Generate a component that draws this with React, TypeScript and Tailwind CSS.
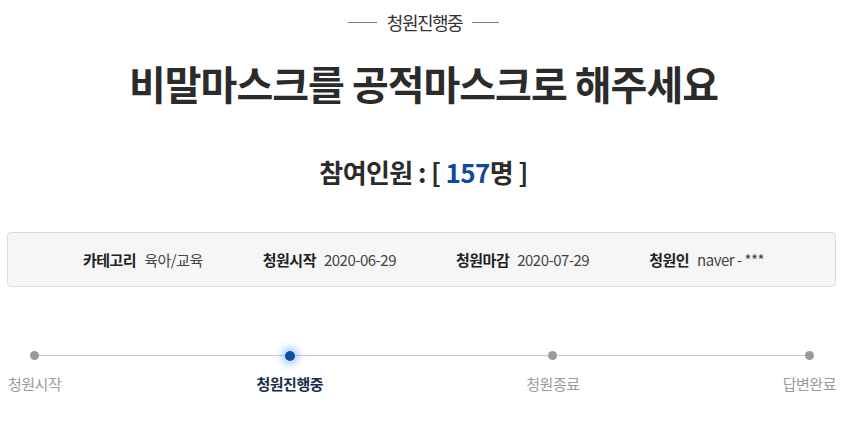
import React from "react";

const steps = [
  { label: "청원시작", active: false },
  { label: "청원진행중", active: true },
  { label: "청원종료", active: false },
  { label: "답변완료", active: false },
];

const infos = [
  { label: "카테고리", value: "육아/교육" },
  { label: "청원시작", value: "2020-06-29" },
  { label: "청원마감", value: "2020-07-29" },
  { label: "청원인", value: "naver - ***" },
];

export default function App() {
  return (
    <div className="w-[847px] h-[422px] bg-white overflow-hidden font-['Noto_Sans_CJK_KR','Liberation_Sans',sans-serif] text-[#333]">
      {/* status tag */}
      <div className="pt-[10px] flex items-center justify-center gap-[10px]">
        <span className="w-[29px] h-px bg-[#777]" />
        <span className="text-[18px] leading-[24px] tracking-[-1.5px] text-[#333]">청원진행중</span>
        <span className="w-[27px] h-px bg-[#777]" />
      </div>

      <h1 className="mt-[24px] text-center text-[40px] leading-[50px] font-bold tracking-[-1px] text-[#2b2b2b]">
        비말마스크를 공적마스크로 해주세요
      </h1>

      <div className="mt-[48px] text-center text-[26px] leading-[32px] font-bold tracking-[-0.6px] text-[#2b2b2b]">
        참여인원 : [ <span className="text-[#0c4a9b]">157</span>명 ]
      </div>

      {/* info box */}
      <div className="mt-[44px] ml-[7px] mr-[11px] h-[55px] rounded-[4px] border border-[#dcdcdc] bg-[#f6f6f6] flex items-center justify-center gap-[60px] pl-[4px]">
        {infos.map((it) => (
          <div key={it.label} className="flex items-center gap-[8px] text-[15px] leading-[20px] tracking-[-0.5px]">
            <span className="font-bold text-[#222]">{it.label}</span>
            <span className="text-[#444]">{it.value}</span>
          </div>
        ))}
      </div>

      {/* progress */}
      <div className="relative mt-[64px] mx-[8px] mr-[11px] flex justify-between">
        <div className="absolute left-[25px] right-[27px] top-[4px] h-px bg-[#c8c8c8]" />
        {steps.map((s) => (
          <div key={s.label} className={s.active ? "relative flex flex-col items-center -ml-[8px]" : "relative flex flex-col items-center"}>
            <div className="h-[9px] flex items-center justify-center">
              {s.active ? (
                <span className="w-[10px] h-[10px] rounded-full bg-[#0b4ea2] shadow-[0_0_6px_5px_rgba(120,180,240,0.45)]" />
              ) : (
                <span className="w-[9px] h-[9px] rounded-full bg-[#9a9a9a]" />
              )}
            </div>
            <span
              className={
                s.active
                  ? "mt-[14px] text-[15px] leading-[20px] tracking-[-0.5px] font-bold text-[#1c2d4c]"
                  : "mt-[14px] text-[15px] leading-[20px] tracking-[-0.5px] text-[#9a9a9a]"
              }
            >
              {s.label}
            </span>
          </div>
        ))}
      </div>
    </div>
  );
}
